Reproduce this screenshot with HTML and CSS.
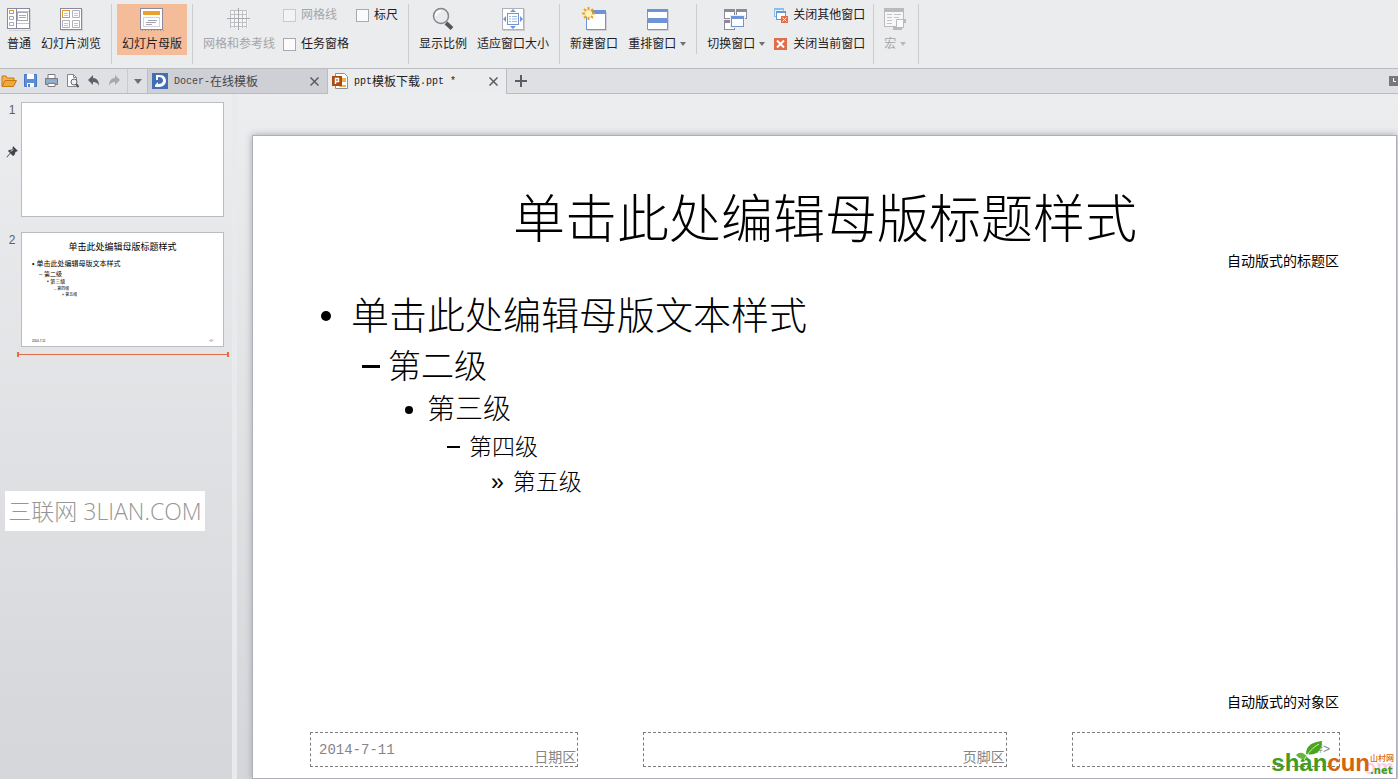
FILE: index.html
```html
<!DOCTYPE html>
<html lang="zh-CN">
<head>
<meta charset="utf-8">
<title>ppt模板下载.ppt</title>
<link rel="stylesheet" href="styles.css">
</head>
<body>
<header class="ribbon">
  <button class="tool" type="button">
    <svg class="icon" width="24" height="24" viewBox="0 0 24 24"><path d="M2 23.500h22M23.500 2v22" stroke="#d3d4d8"/><rect x=".5" y="1.500" width="22" height="20" fill="#fff" stroke="#8b8a9c"/><path d="M9.500 2v19" stroke="#8b8a9c"/><path d="M10 4.500h12M10 16.500h12" stroke="#c3c3cb"/><rect x="10.500" y="5.500" width="10" height="8" fill="#fff" stroke="#a9a9b5"/><path d="M12 8.500h7M12 10.500h7" stroke="#a9a9b5"/><rect x="2.500" y="3.500" width="4" height="3" fill="#fff" stroke="#e39a2c"/><path d="M2.500 9.500h4v3h-4zM2.500 15.500h4v3h-4z" fill="#fff" stroke="#a9a9b5"/></svg>
    <span>普通</span>
  </button>
  <button class="tool" type="button">
    <svg class="icon" width="24" height="24" viewBox="0 0 24 24"><path d="M2 23.500h21M23.500 2v22" stroke="#d3d4d8"/><rect x="1.500" y="1.500" width="21" height="21" fill="#fff" stroke="#8b8a9c"/><rect x="3.500" y="3.500" width="7" height="7" fill="#fff" stroke="#e39a2c"/><path d="M13.500 3.500h7v7h-7zM3.500 13.500h7v7h-7zM13.500 13.500h7v7h-7z" fill="#fff" stroke="#b0b0ba"/><path d="M5 6.500h4M5 8.500h4M15 6.500h4M15 8.500h4M5 16.500h4M5 18.500h4M15 16.500h4M15 18.500h4" stroke="#c3c3cb"/></svg>
    <span>幻灯片浏览</span>
  </button>
  <span class="sep"></span>
  <button class="tool active" type="button">
    <svg class="icon" width="24" height="24" viewBox="0 0 24 24"><path d="M2 23.500h22" stroke="#a88f86" stroke-dasharray="1 2"/><rect x=".5" y="1.500" width="22" height="21" fill="#fff" stroke="#8b8a9c"/><path d="M3 4h17v4h-17z" fill="#e9a12c"/><path d="M3.500 10.500h16v9h-16z" fill="none" stroke="#a4a4ae" stroke-dasharray="1 1"/><path d="M8 13.500h9M6 15.500h10M6 17.500h6" stroke="#a4a4ae"/></svg>
    <span>幻灯片母版</span>
  </button>
  <span class="sep"></span>
  <button class="tool" type="button" disabled>
    <svg class="icon" width="24" height="24" viewBox="0 0 24 24"><path d="M3 3h18v18H3z" fill="#f6f6f7"/><path d="M3.500 3v18M7.500 3v18M15.500 3v18M19.500 3v18M3 3.500h17M3 7.500h17M3 15.500h17M3 19.500h17" stroke="#c0c0c4"/><path d="M11.500 1v22M0 11.500h23" stroke="#a9a9ae"/></svg>
    <span>网格和参考线</span>
  </button>
  <div class="checks">
    <label class="check muted"><input type="checkbox" disabled>网格线</label>
    <label class="check"><input type="checkbox">标尺</label>
    <label class="check"><input type="checkbox">任务窗格</label>
  </div>
  <span class="sep"></span>
  <button class="tool" type="button">
    <svg class="icon" width="24" height="24" viewBox="0 0 24 24"><path d="M15 16l6 5.500" stroke="#55565c" stroke-width="4"/><circle cx="10" cy="9" r="7.500" fill="#e9eaec" stroke="#85858c" stroke-width="1.500"/><path d="M5 9a5 5 0 0 1 5-5" fill="none" stroke="#fff" stroke-width="2"/></svg>
    <span>显示比例</span>
  </button>
  <button class="tool" type="button">
    <svg class="icon" width="24" height="24" viewBox="0 0 24 24"><path d="M2 23.500h22M23.500 2v22" stroke="#c9c9cf"/><rect x="1.500" y="1.500" width="21" height="21" fill="#fff" stroke="#b1b1bb"/><rect x="6.500" y="6.500" width="11" height="11" fill="#fff" stroke="#6f95d6"/><path d="M8 9.500h2M11 9.500h5M8 12h2M11 12h5M8 14.500h2M11 14.500h5" stroke="#9db8e4"/><path d="M12 2l3 3H9zM12 22l3-3H9zM2 12l3-3v6zM22 12l-3-3v6z" fill="#6f95d6"/></svg>
    <span>适应窗口大小</span>
  </button>
  <span class="sep"></span>
  <button class="tool" type="button">
    <svg class="icon" width="26" height="24" viewBox="0 0 26 24"><path d="M6 23.500h20M25.500 5v19" stroke="#d0d1d6"/><rect x="5.500" y="3.500" width="19" height="19" fill="#fff" stroke="#6c94d7"/><path d="M5 3h20v4H5z" fill="#6c94d7"/><path d="M7.500 0v13M1 6.500h13M3 2l9 9M12 2l-9 9" stroke="#eaa126" stroke-width="2"/><circle cx="7.500" cy="6.500" r="3.500" fill="#fff3b5"/></svg>
    <span>新建窗口</span>
  </button>
  <button class="tool" type="button">
    <svg class="icon" width="24" height="24" viewBox="0 0 24 24"><path d="M3 23.500h21M23.500 3v21" stroke="#d0d1d6"/><path d="M2.500 2.500h20v9h-20zM2.500 12.500h20v10h-20z" fill="#fff" stroke="#6c94d7"/><path d="M2 2h21v3H2zM2 12h21v4H2z" fill="#6c94d7"/></svg>
    <span class="drop">重排窗口<i class="caret"></i></span>
  </button>
  <span class="sep short"></span>
  <button class="tool" type="button">
    <svg class="icon" width="24" height="24" viewBox="0 0 24 24"><g fill="#fff" stroke="#8b8a9c"><rect x=".5" y="2.500" width="10" height="9"/><rect x="12.500" y="2.500" width="10" height="9"/><rect x=".5" y="13.500" width="10" height="9"/></g><path d="M0 2h11v3H0zM12 2h11v3H12zM0 13h8v3H0z" fill="#8b8a9c"/><path d="M6 8h15v13H6z" fill="#eceef0"/><rect x="7.500" y="9.500" width="12" height="10" fill="#fff" stroke="#6c94d7"/><path d="M7 9h13v3H7z" fill="#6c94d7"/></svg>
    <span class="drop">切换窗口<i class="caret"></i></span>
  </button>
  <div class="closers">
    <button class="line" type="button">
      <svg width="14" height="16" viewBox="0 0 14 16"><rect x=".5" y="1.500" width="9" height="8" fill="#e4f1fa" stroke="#8cbfe8"/><path d="M0 1h10v2H0z" fill="#8cbfe8"/><rect x="2.500" y="4.500" width="9" height="8" fill="#fff" stroke="#6c94d7"/><path d="M2 4h10v2H2z" fill="#6c94d7"/><path d="M7 9h7v7H7z" fill="#df6d49"/><path d="M8.500 10.500l4 4m0-4l-4 4" stroke="#fff"/></svg>
      关闭其他窗口
    </button>
    <button class="line" type="button">
      <svg width="14" height="14" viewBox="0 0 14 14"><path d="M0 1h13v12H0z" fill="#df6d49"/><path d="M3 3.500l7 7m0-7l-7 7" stroke="#fff" stroke-width="2"/></svg>
      关闭当前窗口
    </button>
  </div>
  <span class="sep"></span>
  <button class="tool" type="button" disabled>
    <svg class="icon" width="22" height="24" viewBox="0 0 22 24"><rect x=".5" y="1.500" width="19" height="18" fill="#f7f7f8" stroke="#b9b9be"/><path d="M0 1h20v4H0z" fill="#b9b9be"/><path d="M3 7.500h5M10 7.500h7M3 10.500h5M10 10.500h5M3 13.500h5M3 16.500h5" stroke="#c4c4c8"/><path d="M12.500 12.500h7v8h-7z" fill="#fbfbfc" stroke="#b9b9be"/><path d="M9 20h9v3H9zM19 12h3v4h-3z" fill="#b9b9be"/></svg>
    <span class="drop">宏<i class="caret"></i></span>
  </button>
  <span class="sep last"></span>
</header>

<nav class="tabbar">
  <div class="quick">
    <button type="button" aria-label="打开"><svg width="16" height="14" viewBox="0 0 16 14"><path d="M1 12V2h4l1 2h7v3" fill="#f0b457" stroke="#c9780f"/><path d="M1 12.500l3-6h11.500l-3 6z" fill="#eda93b" stroke="#c9780f"/></svg></button>
    <button type="button" aria-label="保存"><svg width="14" height="14" viewBox="0 0 14 14"><path d="M.5 .5h12v12H.5z" fill="#5c8fd8" stroke="#4777c2"/><path d="M3 0h7v5H3zM3 9h7v4H3z" fill="#fff"/><path d="M4 10h2v3H4z" fill="#4f82cc"/></svg></button>
    <button type="button" aria-label="打印"><svg width="14" height="14" viewBox="0 0 14 14"><path d="M3 .5h7v4H3z" fill="#fff" stroke="#7c7c89"/><path d="M.5 4.500h12v6H.5z" fill="#a5a5b0" stroke="#777785"/><path d="M1 6h11v2H1z" fill="#86b2d8"/><path d="M3 9.500h7v3H3z" fill="#fff" stroke="#7c7c89"/></svg></button>
    <button type="button" aria-label="打印预览"><svg width="14" height="14" viewBox="0 0 14 14"><path d="M1.500 .5h6l3 3v9h-9z" fill="#fff" stroke="#85858f"/><path d="M7.500 .5v3h3" fill="none" stroke="#85858f"/><circle cx="8" cy="8" r="3" fill="#edf1f4" stroke="#66666e"/><path d="M10 10l2.500 3" stroke="#55555c" stroke-width="2"/></svg></button>
    <button type="button" aria-label="撤销"><svg width="14" height="14" viewBox="0 0 14 14"><path d="M1 6l5-5v3c4 0 6 3 6 8-1-3-3-4-6-4v3z" fill="#5f6069"/></svg></button>
    <button type="button" aria-label="恢复"><svg width="14" height="14" viewBox="0 0 14 14"><path d="M12 6L7 1v3C3 4 1 7 1 12c1-3 3-4 6-4v3z" fill="#a7a8ad"/></svg></button>
    <button class="more" type="button" aria-label="更多"><i class="caret wide"></i></button>
  </div>
  <div class="tab">
    <svg width="16" height="16" viewBox="0 0 16 16"><path d="M0 0h16v16H0z" fill="#426eb4"/><path d="M4 2h4c4 0 6 3 6 6s-3 6-7 6H3v-2l3-3v2c3 0 5-1 5-3.500S9 4 6 4v3H4z" fill="#fff"/></svg>
    <a class="name" href="#docer"><span class="latin">Docer-</span><span>在线模板</span></a>
    <button class="close" type="button" aria-label="关闭"><svg width="9" height="9" viewBox="0 0 9 9"><path d="M.5 .5l8 8m0-8l-8 8" stroke="#5b5c64" stroke-width="1.500"/></svg></button>
  </div>
  <div class="tab current">
    <svg width="16" height="16" viewBox="0 0 16 16"><path d="M3.500 .5h9l3 3v12h-12z" fill="#fff" stroke="#8e8e93"/><path d="M10 5h4v4h-4zM7 12h7v2H7z" fill="#eeb04e"/><path d="M0 3h10v10H0z" fill="#ad4b0c"/><path d="M3.500 11V5.500h3v3h-3" fill="none" stroke="#fff" stroke-width="1.500"/></svg>
    <a class="name" href="#ppt"><span class="latin">ppt</span><span>模板下载</span><span class="latin">.ppt *</span></a>
    <button class="close" type="button" aria-label="关闭"><svg width="9" height="9" viewBox="0 0 9 9"><path d="M.5 .5l8 8m0-8l-8 8" stroke="#5b5c64" stroke-width="1.500"/></svg></button>
  </div>
  <button class="add" type="button" aria-label="新建"><svg width="12" height="12" viewBox="0 0 12 12"><path d="M6 0v12M0 6h12" stroke="#5b5c64" stroke-width="2"/></svg></button>
  <button class="pane" type="button" aria-label="任务窗格"><svg width="9" height="10" viewBox="0 0 9 10"><path d="M0 0h9v10H0z" fill="#77787d"/><path d="M4.500 2v3.500H7" fill="none" stroke="#fff"/></svg></button>
</nav>

<main class="work">
  <aside class="panel">
    <div class="entry">
      <div class="mark">
        <span>1</span>
        <svg width="12" height="12" viewBox="0 0 12 12"><path d="M7 0l5 5-1.500.500-1 .5-1 3L7 10 4.500 7.500 1 11.500l-.5-.5L4 7 2 5l1-1 3-.5.500-1z" fill="#434449"/><path d="M5 5.500l2-2" stroke="#fff"/></svg>
      </div>
      <div class="thumb"></div>
    </div>
    <div class="entry">
      <div class="mark"><span>2</span></div>
      <div class="thumb">
        <p class="t-title">单击此处编辑母版标题样式</p>
        <ul class="t-list">
          <li class="t1">• 单击此处编辑母版文本样式</li>
          <li class="t2">– 第二级</li>
          <li class="t3">• 第三级</li>
          <li class="t4">– 第四级</li>
          <li class="t5">» 第五级</li>
        </ul>
        <p class="t-foot"><span>2014-7-11</span><span>‹#›</span></p>
      </div>
    </div>
    <div class="insert"></div>
    <div class="stamp">三联网 3LIAN.COM</div>
  </aside>
  <div class="splitter"></div>
  <section class="canvas">
    <article class="slide">
      <h1 class="title">单击此处编辑母版标题样式</h1>
      <p class="area">自动版式的标题区</p>
      <ul class="levels">
        <li class="l1"><span class="dot"></span>单击此处编辑母版文本样式</li>
        <li class="l2"><span class="dash"></span>第二级</li>
        <li class="l3"><span class="dot"></span>第三级</li>
        <li class="l4"><span class="dash"></span>第四级</li>
        <li class="l5"><span class="quote">»</span>第五级</li>
      </ul>
      <p class="area bottom">自动版式的对象区</p>
      <footer class="foot">
        <div class="box"><span class="date">2014-7-11</span><span class="kind">日期区</span></div>
        <div class="box"><span class="kind">页脚区</span></div>
        <div class="box"><span class="num">#&gt;</span></div>
      </footer>
      <div class="brand">
        <span class="ghost">om</span>
        <svg class="leaf" width="32" height="24" viewBox="0 0 32 24"><path d="M11 13C11 4 18 1 27 0 27 9 22 15 11 13z" fill="#49a51d"/><path d="M1 14c4-4 9-2 12 3-5 2-9 1-12-3z" fill="#67b63a"/><path d="M9 19C13 12 18 6 24 3" fill="none" stroke="#d9f1bd"/></svg>
        <span class="word"><b>shan</b><em>cun</em></span>
        <span class="side"><em>山村网</em><b>.net</b></span>
      </div>
    </article>
  </section>
</main>
</body>
</html>
```
FILE: styles.css
```css
* { box-sizing: border-box; }

body {
  margin: 0;
  height: 100vh;
  display: flex;
  flex-direction: column;
  overflow: hidden;
  background: #ebecee;
  color: #1e2024;
  font: 12px/16px "Liberation Sans", "Noto Sans CJK SC", sans-serif;
}

button {
  border: 0;
  padding: 0;
  background: none;
  color: inherit;
  font: inherit;
}

p, ul, h1 { margin: 0; padding: 0; list-style: none; }
svg { display: block; flex: none; }

/* Ribbon */
.ribbon {
  flex: none;
  height: 69px;
  display: flex;
  align-items: flex-start;
  padding: 4px 0 0 2px;
  border-bottom: 1px solid #bbbcbf;
  white-space: nowrap;
}
.tool {
  height: 51px;
  padding: 3px 5px;
  display: flex;
  flex-direction: column;
  align-items: center;
  gap: 5px;
}
.tool.active { background: #f4bc98; }
.tool:disabled, .muted { color: #a4a5a9; }
.drop { display: flex; align-items: center; gap: 4px; }
.caret {
  border: 3px solid transparent;
  border-top: 4px solid #6e6f74;
  border-bottom: 0;
}
.tool:disabled .caret { border-top-color: #b9babd; }
.caret.wide { border-width: 5px 4px 0; }
.sep { flex: none; width: 1px; height: 60px; margin: 0 5px; background: #cbccd0; }
.sep.short { height: 50px; }
.sep.last { margin-left: 7px; }
.checks {
  display: grid;
  grid-template-columns: 73px auto;
  row-gap: 13px;
  padding: 3px 5px 0 3px;
}
.check { display: flex; align-items: center; gap: 5px; }
.check input {
  appearance: none;
  width: 13px;
  height: 13px;
  margin: 0;
  border: 1px solid #a9aab0;
  background: #fbfbfc;
}
.check input:disabled { border-color: #c9cacd; background: #f3f3f5; }
.closers { display: flex; flex-direction: column; gap: 13px; padding: 3px 3px 0 4px; }
.line { display: flex; align-items: center; height: 16px; gap: 5px; }

/* Document tabs */
.tabbar {
  flex: none;
  height: 25px;
  display: flex;
  align-items: stretch;
  background: #dfe0e4;
  border-bottom: 1px solid #bbbcbf;
}
.quick { display: flex; align-items: center; gap: 7px; padding-left: 1px; }
.more {
  align-self: stretch;
  width: 20px;
  margin-left: -2px;
  display: flex;
  align-items: center;
  justify-content: center;
  border-left: 1px solid #c9cace;
}
.tab {
  width: 180px;
  display: flex;
  align-items: center;
  padding: 0 8px 0 4px;
  gap: 6px;
  background: #cfd0d5;
  border-left: 1px solid #bbbcbf;
}
.tab.current {
  background: #ebecee;
  border-right: 1px solid #bbbcbf;
  margin-bottom: -1px;
  padding-bottom: 1px;
}
.name {
  flex: 1;
  display: flex;
  align-items: center;
  padding-top: 2px;
  color: #45464b;
  text-decoration: none;
  white-space: pre;
}
.current .name { color: #1e2024; }
.latin { font: 10px/16px "Liberation Mono", monospace; }
.add { padding: 0 8px; }
.pane { margin-left: auto; }

/* Work area */
.work {
  flex: 1;
  min-height: 0;
  display: flex;
  background: linear-gradient(#ecedef, #d5d6d9);
}
.panel {
  position: relative;
  width: 232px;
  flex: none;
  display: flex;
  flex-direction: column;
  gap: 15px;
  padding: 8px 8px 0 0;
}
.entry { display: grid; grid-template-columns: 21px 203px; }
.mark {
  display: flex;
  flex-direction: column;
  align-items: center;
  gap: 28px;
  padding-left: 3px;
  color: #5d5e63;
}
.thumb {
  height: 115px;
  border: 1px solid #bbbcc0;
  background: #fff;
  color: #000;
  display: flex;
  flex-direction: column;
  padding: 8px 10px 0;
}
.t-title { font-size: 9px; line-height: 12px; text-align: center; }
.t-list { padding-top: 5px; }
.t1 { font-size: 7px; line-height: 12px; }
.t2 { font-size: 6px; line-height: 8px; padding-left: 7px; }
.t3 { font-size: 5px; line-height: 7px; padding-left: 15px; }
.t4 { font-size: 4px; line-height: 7px; padding-left: 22px; }
.t5 { font-size: 4px; line-height: 6px; padding-left: 30px; }
.t-foot {
  display: flex;
  justify-content: space-between;
  margin-top: auto;
  font-size: 3px;
  line-height: 10px;
}
.insert {
  height: 5px;
  margin: -10px -5px 0 17px;
  border: solid #df6d49;
  border-width: 0 2px;
  background: linear-gradient(#df6d49, #df6d49) center / 100% 1px no-repeat;
}
.stamp {
  position: absolute;
  left: 5px;
  top: 397px;
  width: 200px;
  height: 40px;
  background: #fff;
  color: #969696;
  font: 300 23px/40px "Open Sans", "Noto Sans CJK SC", sans-serif;
  text-align: center;
  white-space: nowrap;
}
.splitter { flex: none; width: 5px; background: #e9eaec; }
.canvas { flex: 1; min-width: 0; display: flex; padding: 41px 1px 0 15px; }

/* Slide */
.slide {
  position: relative;
  flex: 1;
  display: flex;
  flex-direction: column;
  padding: 52px 56px 11px 57px;
  border: 1px solid #aeaebc;
  background: #fff;
  box-shadow: 0 0 7px #a5a6ab;
  color: #000;
}
.title { font-size: 52px; line-height: 64px; font-weight: 300; text-align: center; }
.area { font-size: 14px; line-height: 18px; padding-right: 1px; text-align: right; }
.levels { padding-top: 20px; font-weight: 300; }
.levels li { display: flex; align-items: center; }
.l1 { font-size: 38px; line-height: 52px; padding-left: 11px; gap: 20px; }
.l2 { font-size: 33px; line-height: 49px; padding-left: 52px; gap: 8px; }
.l3 { font-size: 28px; line-height: 38px; padding-left: 95px; gap: 14px; }
.l4 { font-size: 23px; line-height: 36px; padding-left: 137px; gap: 9px; }
.l5 { font-size: 23px; line-height: 34px; padding-left: 181px; gap: 9px; }
.dot { width: 10px; height: 10px; border-radius: 50%; background: #000; }
.l3 .dot { width: 8px; height: 8px; }
.dash { width: 18px; height: 3px; background: #000; }
.l4 .dash { width: 13px; height: 2px; }
.quote { font-weight: 400; }
.bottom { margin-top: auto; }
.foot {
  display: grid;
  grid-template-columns: 268fr 363fr 268fr;
  gap: 65px;
  margin-top: 21px;
}
.box {
  height: 35px;
  display: flex;
  border: 1px dashed #7d7d7d;
  padding: 0 1px 0 8px;
  color: #858585;
}
.date { align-self: center; font: 14px/18px "Liberation Mono", monospace; }
.kind { margin-left: auto; align-self: flex-end; font-size: 14px; line-height: 18px; }
.num { margin-left: auto; padding: 8px 8px 0 0; font-size: 12px; }

/* Site mark over the slide corner */
.brand {
  position: absolute;
  right: 2px;
  bottom: 1px;
  display: flex;
  align-items: flex-end;
  white-space: nowrap;
}
.brand b { color: #3f9e22; }
.brand em { color: #d5650c; font-style: normal; }
.word { font: bold 24px/28px "Liberation Sans", sans-serif; position: relative; }
.side {
  position: relative;
  display: flex;
  flex-direction: column;
  font: bold 8px/12px "Liberation Sans", "Noto Sans CJK SC", sans-serif;
}
.side em { font-weight: 500; }
.side b { font: bold 10px/12px "DejaVu Sans", sans-serif; }
.leaf { position: absolute; left: 24px; top: -8px; z-index: 1; }
.ghost {
  position: absolute;
  right: 0;
  bottom: -2px;
  color: #fbd0e4;
  font: bold 20px/24px "Liberation Sans", sans-serif;
}
```
